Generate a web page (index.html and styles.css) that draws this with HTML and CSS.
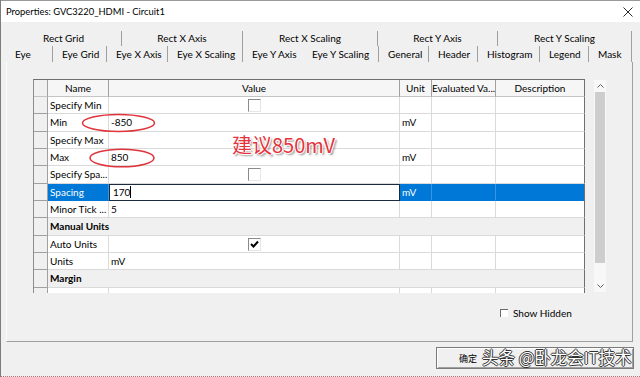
FILE: index.html
```html
<!DOCTYPE html>
<html lang="en">
<head>
    <meta charset="UTF-8">
    <title>Properties: GVC3220_HDMI - Circuit1</title>
    <link rel="stylesheet" href="styles.css">
</head>
<body>
<div class="window">
    <div class="titlebar">
        <span class="title">Properties: GVC3220_HDMI - Circuit1</span>
        <svg class="close" width="10" height="10" viewBox="0 0 10 10"><path d="M0.5 0.5L9.5 9.5M9.5 0.5L0.5 9.5" stroke="#2b2b2b" stroke-width="1"/></svg>
    </div>

    <div class="tabs">
        <div class="tab-row back">
            <div class="tab">Rect Grid</div>
            <div class="tab">Rect X Axis</div>
            <div class="tab">Rect X Scaling</div>
            <div class="tab">Rect Y Axis</div>
            <div class="tab">Rect Y Scaling</div>
        </div>
        <div class="tab-row front">
            <div class="tab">Eye</div>
            <div class="tab">Eye Grid</div>
            <div class="tab">Eye X Axis</div>
            <div class="tab">Eye X Scaling</div>
            <div class="tab before-active">Eye Y Axis</div>
            <div class="tab active">Eye Y Scaling</div>
            <div class="tab">General</div>
            <div class="tab">Header</div>
            <div class="tab">Histogram</div>
            <div class="tab">Legend</div>
            <div class="tab">Mask</div>
        </div>
    </div>

    <div class="panel">
        <div class="grid-area">
            <div class="prop-grid">
                <div class="row head">
                    <div class="rh"></div><div>Name</div><div>Value</div><div>Unit</div><div>Evaluated Va...</div><div class="last">Description</div>
                </div>
                <div class="row">
                    <div class="rh"></div><div>Specify Min</div><div class="val-check"><span class="check"></span></div><div></div><div></div><div class="last"></div>
                </div>
                <div class="row">
                    <div class="rh"></div><div>Min</div><div>-850</div><div>mV</div><div></div><div class="last"></div>
                </div>
                <div class="row">
                    <div class="rh"></div><div>Specify Max</div><div></div><div></div><div></div><div class="last"></div>
                </div>
                <div class="row">
                    <div class="rh"></div><div>Max</div><div>850</div><div>mV</div><div></div><div class="last"></div>
                </div>
                <div class="row">
                    <div class="rh"></div><div>Specify Spa...</div><div class="val-check"><span class="check"></span></div><div></div><div></div><div class="last"></div>
                </div>
                <div class="row selected">
                    <div class="rh"></div><div class="sel">Spacing</div><div class="edit">170<span class="caret"></span></div><div class="sel">mV</div><div class="sel"></div><div class="sel last"></div>
                </div>
                <div class="row">
                    <div class="rh"></div><div>Minor Tick ...</div><div>5</div><div></div><div></div><div class="last"></div>
                </div>
                <div class="row section">
                    <div class="rh"></div><div class="span last">Manual Units</div>
                </div>
                <div class="row">
                    <div class="rh"></div><div>Auto Units</div><div class="val-check"><span class="check on"><svg width="11" height="11" viewBox="0 0 11 11"><path d="M2 5L4.5 7.5L9 2.5" fill="none" stroke="#000" stroke-width="2"/></svg></span></div><div></div><div></div><div class="last"></div>
                </div>
                <div class="row">
                    <div class="rh"></div><div>Units</div><div>mV</div><div></div><div></div><div class="last"></div>
                </div>
                <div class="row section">
                    <div class="rh"></div><div class="span last">Margin</div>
                </div>
                <div class="row">
                    <div class="rh"></div><div></div><div></div><div></div><div></div><div class="last"></div>
                </div>
            </div>
            <div class="scrollbar">
                <div class="arrow"><svg width="7" height="4" viewBox="0 0 7 4"><path d="M0.5 3.5L3.5 0.5L6.5 3.5" fill="none" stroke="#606060"/></svg></div>
                <div class="thumb"></div>
                <div class="track"></div>
                <div class="arrow"><svg width="7" height="4" viewBox="0 0 7 4"><path d="M0.5 0.5L3.5 3.5L6.5 0.5" fill="none" stroke="#606060"/></svg></div>
            </div>
        </div>
        <div class="show-hidden"><span class="small-box"></span>Show Hidden</div>
    </div>

    <div class="buttons">
        <div class="btn">确定</div>
    </div>

    <svg class="marks" width="640" height="377" viewBox="0 0 640 377">
        <ellipse cx="118.5" cy="123" rx="36" ry="8.5" fill="none" stroke="#e0343c" stroke-width="1.5"/>
        <ellipse cx="122" cy="158" rx="32" ry="8.8" fill="none" stroke="#e0343c" stroke-width="1.5"/>
    </svg>
    <div class="note">建议850mV</div>
    <div class="watermark">头条 @卧龙会IT技术</div>
</div>
</body>
</html>
```

FILE: styles.css
```css
body {
    margin: 0;
    font-family: Lato, "Liberation Sans", "Noto Sans CJK SC", sans-serif;
    font-size: 10px;
    color: #000;
    background: #f0f0f0;
}

.window {
    position: relative;
    width: 640px;
    height: 377px;
    box-sizing: border-box;
    border-left: 1px solid #7d7d7d;
    border-bottom: 1px dotted #b0706c;
    background: #f0f0f0;
    overflow: hidden;
}

.titlebar {
    height: 22px;
    box-sizing: border-box;
    border-top: 1px solid #9a9a9a;
    background: #fff;
    display: flex;
    align-items: center;
    justify-content: space-between;
    padding: 0 7px 0 5px;
}

.title {
    font-size: 9.4px;
}

/* tab strip */
.tabs {
    padding: 9px 0 0 5px;
}

.tab-row {
    display: grid;
}

.tab-row.back {
    height: 15px;
    grid-template-columns: 116px 121px 135px 120px 134px;
}

.tab-row.front {
    height: 16px;
    grid-template-columns: 47px 54px 61px 75px 60px 76px 50px 49px 62px 49px 43px;
}

.tab {
    box-sizing: border-box;
    border-right: 1px solid #a0a0a0;
    white-space: nowrap;
}

.back .tab {
    text-align: center;
    line-height: 15px;
}

.front .tab {
    padding-left: 9px;
    line-height: 16px;
}

.front .tab.before-active {
    border-right-color: transparent;
}

/* tab page */
.panel {
    margin-left: 5px;
    width: 627px;
    height: 280px;
    box-sizing: border-box;
    border-left: 1px solid #fbfbfb;
    border-right: 1px solid #a0a0a0;
    border-bottom: 1px solid #a0a0a0;
    padding: 17px 0 0 26px;
}

.grid-area {
    display: flex;
    gap: 9px;
    height: 214px;
}

.prop-grid {
    width: 552px;
    height: 214px;
    box-sizing: border-box;
    overflow: hidden;
    border-left: 1px solid #8c8c8c;
    border-top: 1px solid #6f6f6f;
    background: #fff;
}

.row {
    display: grid;
    grid-template-columns: 14px 61px 291px 32px 64px 89px;
    height: 17.33px;
}

.row > div {
    box-sizing: border-box;
    border-right: 1px solid #dadada;
    border-bottom: 1px solid #dadada;
    padding-left: 2px;
    line-height: 16px;
    white-space: nowrap;
    overflow: hidden;
}

.row > .rh {
    background: #f0f0f0;
    border-right-color: #a0a0a0;
    border-bottom-color: #a0a0a0;
    padding: 0;
}

.row > .last {
    border-right-color: #6f6f6f;
}

.row.head {
    height: 17px;
    background: #f6f6f6;
}

.row.head > div {
    text-align: center;
    padding: 0;
    border-right-color: #a0a0a0;
    border-bottom-color: #c4c4c4;
}

.row.head > .last {
    border-right-color: #6f6f6f;
}

.row.section > .span {
    grid-column: span 5;
    background: #f0f0f0;
    font-weight: bold;
}

.row.selected > .sel {
    background: #0078d7;
    color: #fff;
    border-right-color: #3a93de;
    border-bottom-color: #0078d7;
}

.row.selected > .last {
    border-right-color: #6f6f6f;
}

.row.selected > .edit {
    background: #fff;
    border: 1px solid #1b2a3c;
    padding-left: 3px;
    line-height: 15px;
}

.caret {
    display: inline-block;
    width: 1px;
    height: 12px;
    background: #000;
    vertical-align: -2px;
}

.row > .val-check {
    padding: 0;
}

.check {
    display: block;
    width: 13px;
    height: 13px;
    margin: 2px auto 0;
    box-sizing: border-box;
    border-top: 1px solid #8a8a8a;
    border-left: 1px solid #8a8a8a;
    border-right: 1px solid #e6e6e6;
    border-bottom: 1px solid #e6e6e6;
    background: #fff;
}

.check svg {
    display: block;
}

/* scrollbar */
.scrollbar {
    width: 12px;
    height: 212px;
    margin-top: 1px;
    background: #f8f8f8;
    display: flex;
    flex-direction: column;
}

.arrow {
    height: 12px;
    display: flex;
    align-items: center;
    justify-content: center;
}

.thumb {
    height: 171px;
    margin: 0 1px;
    background: #cdcdcd;
}

.track {
    flex: 1;
}

.show-hidden {
    display: flex;
    align-items: center;
    gap: 5px;
    height: 15px;
    margin: 12px 0 0 467px;
}

.small-box {
    width: 8px;
    height: 8px;
    box-sizing: border-box;
    border-top: 1px solid #6a6a6a;
    border-left: 1px solid #6a6a6a;
    background: #fff;
}

/* dialog buttons */
.buttons {
    display: flex;
    justify-content: flex-end;
    padding: 5px 6px 0 0;
}

.btn {
    width: 198px;
    height: 22px;
    box-sizing: border-box;
    border: 1px solid #7a7a7a;
    box-shadow: inset 1px 1px #ffffff, inset -1px -1px #a0a0a0;
    background: #f0f0f0;
    display: flex;
    align-items: center;
    padding-left: 22px;
    font-family: "Noto Sans CJK SC", sans-serif;
    font-size: 9px;
}

/* overlays on top of the screenshot */
.marks {
    position: absolute;
    left: -1px;
    top: 0;
}

.note {
    position: absolute;
    left: 231px;
    top: 134px;
    font-family: "Noto Sans CJK SC", sans-serif;
    font-size: 20px;
    line-height: 22px;
    color: #e5333d;
    text-shadow: 1px 0 #fff, -1px 0 #fff, 0 1px #fff, 0 -1px #fff, 2px 2px 2px rgba(0, 0, 0, 0.45);
}

.watermark {
    position: absolute;
    left: 481px;
    top: 346px;
    font-family: "Noto Sans CJK SC", sans-serif;
    font-size: 16.5px;
    line-height: 22px;
    color: #fff;
    text-shadow: 1px 0 #333, -1px 0 #333, 0 1px #333, 0 -1px #333;
}
```
